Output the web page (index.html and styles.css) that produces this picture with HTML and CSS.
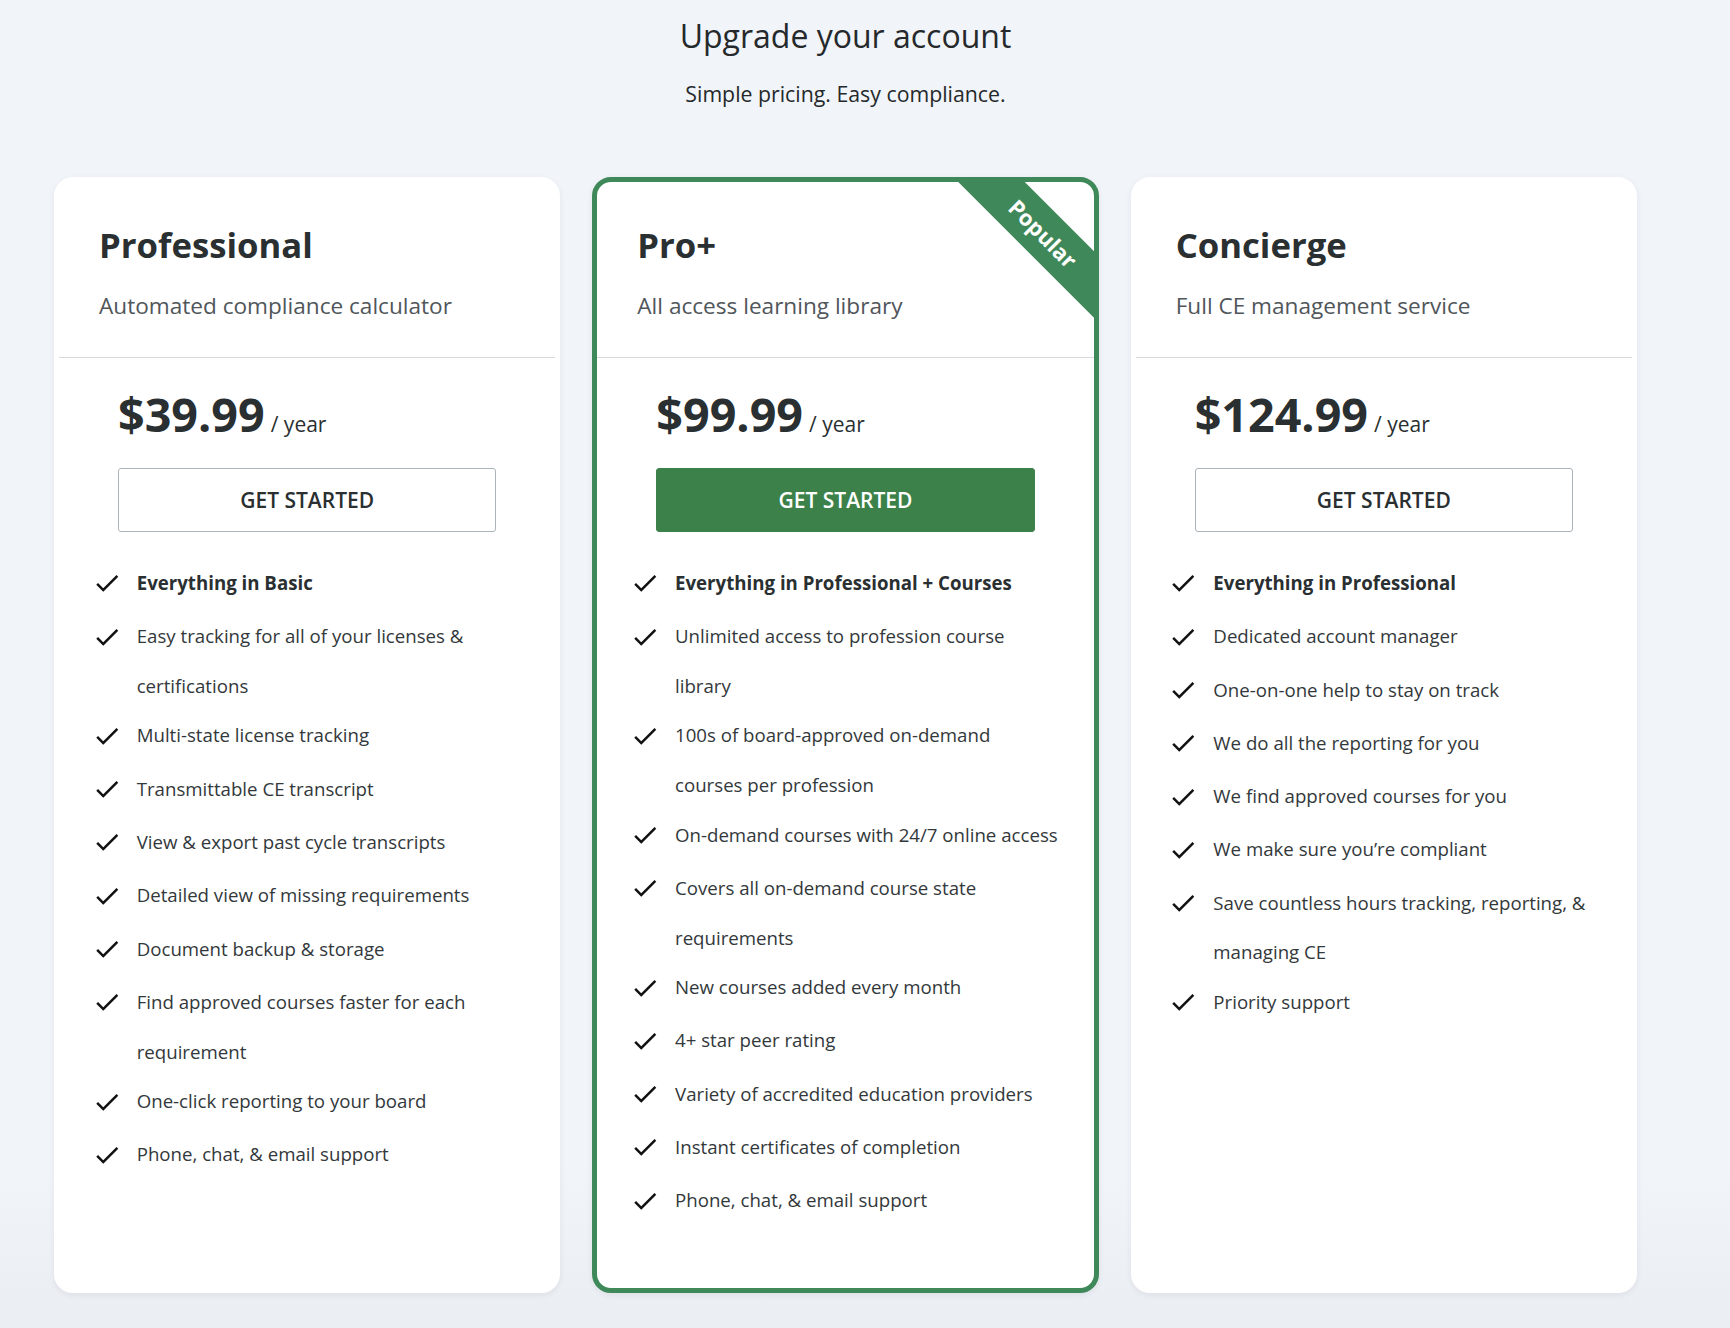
FILE: index.html
```html
<!DOCTYPE html>
<html lang="en">
<head>
<meta charset="utf-8">
<title>Upgrade your account</title>
<link rel="stylesheet" href="styles.css">
</head>
<body>
<main class="page">
  <header class="intro">
    <h1 class="intro-title">Upgrade your account</h1>
    <p class="intro-sub">Simple pricing. Easy compliance.</p>
  </header>

  <section class="plans">
    <article class="card">
      <div class="card-head">
        <h2 class="plan-name">Professional</h2>
        <p class="plan-desc">Automated compliance calculator</p>
      </div>
      <div class="divider"></div>
      <div class="card-price">
        <div class="price"><span class="amount">$39.99</span><span class="per">/ year</span></div>
        <button class="btn">GET STARTED</button>
      </div>
      <ul class="features">
        <li><svg class="check" viewBox="0 0 24 24"><path d="M9 16.17L4.83 12l-1.42 1.41L9 19 21 7l-1.41-1.41z"/></svg><span class="strong">Everything in Basic</span></li>
        <li><svg class="check" viewBox="0 0 24 24"><path d="M9 16.17L4.83 12l-1.42 1.41L9 19 21 7l-1.41-1.41z"/></svg><span>Easy tracking for all of your licenses &amp; certifications</span></li>
        <li><svg class="check" viewBox="0 0 24 24"><path d="M9 16.17L4.83 12l-1.42 1.41L9 19 21 7l-1.41-1.41z"/></svg><span>Multi-state license tracking</span></li>
        <li><svg class="check" viewBox="0 0 24 24"><path d="M9 16.17L4.83 12l-1.42 1.41L9 19 21 7l-1.41-1.41z"/></svg><span>Transmittable CE transcript</span></li>
        <li><svg class="check" viewBox="0 0 24 24"><path d="M9 16.17L4.83 12l-1.42 1.41L9 19 21 7l-1.41-1.41z"/></svg><span>View &amp; export past cycle transcripts</span></li>
        <li><svg class="check" viewBox="0 0 24 24"><path d="M9 16.17L4.83 12l-1.42 1.41L9 19 21 7l-1.41-1.41z"/></svg><span>Detailed view of missing requirements</span></li>
        <li><svg class="check" viewBox="0 0 24 24"><path d="M9 16.17L4.83 12l-1.42 1.41L9 19 21 7l-1.41-1.41z"/></svg><span>Document backup &amp; storage</span></li>
        <li><svg class="check" viewBox="0 0 24 24"><path d="M9 16.17L4.83 12l-1.42 1.41L9 19 21 7l-1.41-1.41z"/></svg><span>Find approved courses faster for each requirement</span></li>
        <li><svg class="check" viewBox="0 0 24 24"><path d="M9 16.17L4.83 12l-1.42 1.41L9 19 21 7l-1.41-1.41z"/></svg><span>One-click reporting to your board</span></li>
        <li><svg class="check" viewBox="0 0 24 24"><path d="M9 16.17L4.83 12l-1.42 1.41L9 19 21 7l-1.41-1.41z"/></svg><span>Phone, chat, &amp; email support</span></li>
      </ul>
    </article>

    <article class="card card-popular">
      <div class="ribbon">Popular</div>
      <div class="card-head">
        <h2 class="plan-name">Pro+</h2>
        <p class="plan-desc">All access learning library</p>
      </div>
      <div class="divider"></div>
      <div class="card-price">
        <div class="price"><span class="amount">$99.99</span><span class="per">/ year</span></div>
        <button class="btn btn-primary">GET STARTED</button>
      </div>
      <ul class="features">
        <li><svg class="check" viewBox="0 0 24 24"><path d="M9 16.17L4.83 12l-1.42 1.41L9 19 21 7l-1.41-1.41z"/></svg><span class="strong">Everything in Professional + Courses</span></li>
        <li><svg class="check" viewBox="0 0 24 24"><path d="M9 16.17L4.83 12l-1.42 1.41L9 19 21 7l-1.41-1.41z"/></svg><span>Unlimited access to profession course library</span></li>
        <li><svg class="check" viewBox="0 0 24 24"><path d="M9 16.17L4.83 12l-1.42 1.41L9 19 21 7l-1.41-1.41z"/></svg><span>100s of board-approved on-demand courses per profession</span></li>
        <li><svg class="check" viewBox="0 0 24 24"><path d="M9 16.17L4.83 12l-1.42 1.41L9 19 21 7l-1.41-1.41z"/></svg><span>On-demand courses with 24/7 online access</span></li>
        <li><svg class="check" viewBox="0 0 24 24"><path d="M9 16.17L4.83 12l-1.42 1.41L9 19 21 7l-1.41-1.41z"/></svg><span>Covers all on-demand course state requirements</span></li>
        <li><svg class="check" viewBox="0 0 24 24"><path d="M9 16.17L4.83 12l-1.42 1.41L9 19 21 7l-1.41-1.41z"/></svg><span>New courses added every month</span></li>
        <li><svg class="check" viewBox="0 0 24 24"><path d="M9 16.17L4.83 12l-1.42 1.41L9 19 21 7l-1.41-1.41z"/></svg><span>4+ star peer rating</span></li>
        <li><svg class="check" viewBox="0 0 24 24"><path d="M9 16.17L4.83 12l-1.42 1.41L9 19 21 7l-1.41-1.41z"/></svg><span>Variety of accredited education providers</span></li>
        <li><svg class="check" viewBox="0 0 24 24"><path d="M9 16.17L4.83 12l-1.42 1.41L9 19 21 7l-1.41-1.41z"/></svg><span>Instant certificates of completion</span></li>
        <li><svg class="check" viewBox="0 0 24 24"><path d="M9 16.17L4.83 12l-1.42 1.41L9 19 21 7l-1.41-1.41z"/></svg><span>Phone, chat, &amp; email support</span></li>
      </ul>
    </article>

    <article class="card">
      <div class="card-head">
        <h2 class="plan-name">Concierge</h2>
        <p class="plan-desc">Full CE management service</p>
      </div>
      <div class="divider"></div>
      <div class="card-price">
        <div class="price"><span class="amount">$124.99</span><span class="per">/ year</span></div>
        <button class="btn">GET STARTED</button>
      </div>
      <ul class="features">
        <li><svg class="check" viewBox="0 0 24 24"><path d="M9 16.17L4.83 12l-1.42 1.41L9 19 21 7l-1.41-1.41z"/></svg><span class="strong">Everything in Professional</span></li>
        <li><svg class="check" viewBox="0 0 24 24"><path d="M9 16.17L4.83 12l-1.42 1.41L9 19 21 7l-1.41-1.41z"/></svg><span>Dedicated account manager</span></li>
        <li><svg class="check" viewBox="0 0 24 24"><path d="M9 16.17L4.83 12l-1.42 1.41L9 19 21 7l-1.41-1.41z"/></svg><span>One-on-one help to stay on track</span></li>
        <li><svg class="check" viewBox="0 0 24 24"><path d="M9 16.17L4.83 12l-1.42 1.41L9 19 21 7l-1.41-1.41z"/></svg><span>We do all the reporting for you</span></li>
        <li><svg class="check" viewBox="0 0 24 24"><path d="M9 16.17L4.83 12l-1.42 1.41L9 19 21 7l-1.41-1.41z"/></svg><span>We find approved courses for you</span></li>
        <li><svg class="check" viewBox="0 0 24 24"><path d="M9 16.17L4.83 12l-1.42 1.41L9 19 21 7l-1.41-1.41z"/></svg><span>We make sure you’re compliant</span></li>
        <li><svg class="check" viewBox="0 0 24 24"><path d="M9 16.17L4.83 12l-1.42 1.41L9 19 21 7l-1.41-1.41z"/></svg><span>Save countless hours tracking, reporting, &amp; managing CE</span></li>
        <li><svg class="check" viewBox="0 0 24 24"><path d="M9 16.17L4.83 12l-1.42 1.41L9 19 21 7l-1.41-1.41z"/></svg><span>Priority support</span></li>
      </ul>
    </article>
  </section>
</main>
</body>
</html>
```

FILE: styles.css
```css
* { box-sizing: border-box; }

html {
  background: #f0f4f9;
}

body {
  margin: 0;
  min-height: 100vh;
  font-family: "Open Sans", "Noto Sans", "Liberation Sans", sans-serif;
  color: #2a2f31;
  background: linear-gradient(180deg, #f1f4f9 0%, #f1f4f9 88%, #eaedf1 100%);
}

.page {
  width: 1583px;
  margin-left: 54px;
  padding-top: 14px;
}

.intro {
  text-align: center;
}

.intro-title {
  margin: 0;
  font-size: 32px;
  font-weight: 400;
  line-height: normal;
  color: #25292b;
}

.intro-sub {
  margin: 22px 0 0;
  font-size: 21.3px;
  line-height: normal;
  color: #25292b;
}

.plans {
  margin-top: 69px;
  display: grid;
  grid-template-columns: repeat(3, 1fr);
  column-gap: 32px;
  align-items: stretch;
}

.card {
  position: relative;
  overflow: hidden;
  background: #ffffff;
  border: 5px solid #ffffff;
  border-radius: 19px;
  box-shadow: 0 2px 6px rgba(30, 40, 60, 0.07);
  display: flex;
  flex-direction: column;
}

.card-popular {
  border-color: #3f8859;
}

.ribbon {
  position: absolute;
  top: 28px;
  right: -69px;
  width: 240px;
  height: 47px;
  line-height: 47px;
  text-align: center;
  background: #3f8859;
  color: #ffffff;
  font-size: 22px;
  font-weight: 700;
  transform: rotate(45deg);
}

.card-head {
  padding: 38.5px 40px 36.5px 40px;
}

.plan-name {
  margin: 0;
  font-size: 34.7px;
  font-weight: 700;
  line-height: normal;
  color: #2a2f31;
}

.plan-desc {
  margin: 22px 0 0;
  font-size: 22.6px;
  line-height: normal;
  color: #50565a;
}

.divider {
  height: 1px;
  background: #d8dbdd;
}

.card-price {
  padding: 24px 59px 0;
}

.price {
  line-height: normal;
  font-size: 46.67px;
  color: #2a2f31;
}

.amount {
  font-weight: 700;
}

.per {
  margin-left: 6px;
  font-size: 21px;
  font-weight: 400;
}

.btn {
  display: block;
  width: 100%;
  height: 64px;
  margin-top: 22px;
  border: 1px solid #aab5ba;
  border-radius: 3px;
  background: #ffffff;
  font-family: inherit;
  font-size: 21px;
  font-weight: 600;
  color: #2a2f31;
  cursor: pointer;
}

.btn-primary {
  background: #3b8149;
  border-color: #3b8149;
  color: #ffffff;
}

.features {
  list-style: none;
  margin: 0;
  padding: 26px 33.5px 59.5px 32.7px;
}

.features li {
  display: flex;
  align-items: flex-start;
  min-height: 53.3px;
  font-size: 18.67px;
  line-height: 49.6px;
  color: #33383b;
}

.features .strong {
  font-weight: 700;
  color: #2a2f31;
}

.check {
  flex: 0 0 30px;
  width: 30px;
  height: 30px;
  margin-top: 10.4px;
  margin-right: 15px;
  fill: #111111;
}
```
